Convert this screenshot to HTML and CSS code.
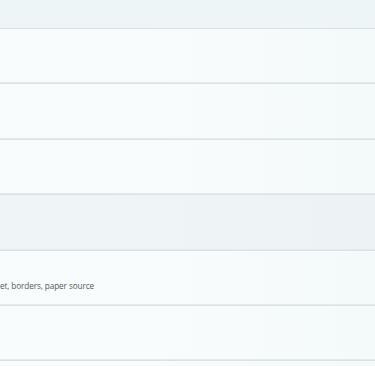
FILE: index.html
```html
<!DOCTYPE html>
<html>
<head>
<meta charset="utf-8">
<link rel="stylesheet" href="styles.css">
</head>
<body>
<div class="list">
  <div class="header"></div>
  <div class="row"></div>
  <div class="row"></div>
  <div class="row"></div>
  <div class="row hover"></div>
  <div class="row"><div class="desc">et, borders, paper source</div></div>
  <div class="row"></div>
  <div class="row"></div>
</div>
</body>
</html>
```
FILE: styles.css
```css
html, body {
  margin: 0;
  padding: 0;
  background: #f7fbfc;
  overflow: hidden;
  font-family: "Open Sans", "DejaVu Sans", sans-serif;
}
.list {
  display: flex;
  flex-direction: column;
  width: 375px;
}
.header {
  box-sizing: border-box;
  height: 29px;
  background: #eef5f7;
  border-bottom: 1px solid #d6e1e7;
}
.row {
  box-sizing: border-box;
  flex: none;
  height: 55.4px;
  background: linear-gradient(90deg, #f8fcfd 0%, #f8fcfd 40%, #f4f9fa 100%);
  border-bottom: 1px solid #d8e2e7;
  box-shadow: inset 0 -1px 0 #e3ebef;
  display: flex;
  align-items: center;
}
.row.hover {
  background: linear-gradient(90deg, #eff5f7 0%, #eff5f7 30%, #edf3f5 100%);
}
.desc {
  white-space: nowrap;
  font-size: 8.2px;
  letter-spacing: -0.1px;
  color: #555a5d;
  margin-top: 16px;
}
```
